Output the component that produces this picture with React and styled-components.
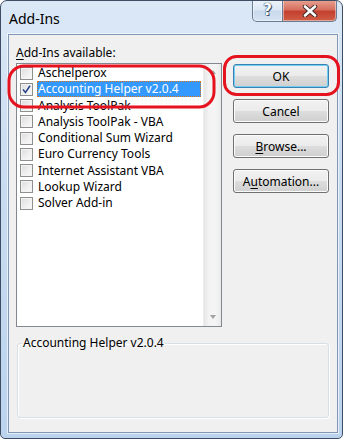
import React from 'react';
import styled, { createGlobalStyle } from 'styled-components';

const Global = createGlobalStyle`
  html, body { margin: 0; padding: 0; background: #ffffff; }
  body { font-family: "Noto Sans", "Liberation Sans", Arial, sans-serif; font-size: 12px; color: #000; }
`;

const Window = styled.div`
  position: relative;
  width: 343px;
  height: 439px;
  box-sizing: border-box;
  border: 1px solid #3d4e64;
  border-radius: 7px 7px 5px 5px;
  background: linear-gradient(180deg, #dbe8f6 0%, #c9dcf1 40%, #bcd3ee 100%);
  display: flex;
  flex-direction: column;
  padding: 0 4px 5px 7px;
  overflow: hidden;
`;

const TitleBar = styled.div`
  height: 33px;
  display: flex;
  align-items: flex-start;
  justify-content: space-between;
`;

const Title = styled.div`
  padding: 8px 0 0 1px;
  font-size: 14px;
  color: #000;
`;

const Caption = styled.div`
  display: flex;
  margin-right: 1px;
  margin-top: -1px;
`;

const CapButton = styled.div`
  height: 22px;
  width: ${p => p.$w}px;
  box-sizing: border-box;
  border: 1px solid #6a7c93;
  border-top: none;
  display: flex;
  align-items: center;
  justify-content: center;
  background: ${p => p.$close
    ? 'linear-gradient(180deg, #e8a291 0%, #d6705f 45%, #c4402f 55%, #cf5e46 100%)'
    : 'linear-gradient(180deg, #edf3fa 0%, #dde8f4 45%, #c9d9ec 55%, #d6e3f2 100%)'};
  border-radius: ${p => p.$close ? '0 0 5px 0' : '0 0 0 5px'};
  border-left: ${p => p.$close ? 'none' : '1px solid #6a7c93'};
  box-shadow: inset 0 0 0 1px rgba(255,255,255,0.45);
`;

const HelpMark = styled.span`
  font-family: "DejaVu Sans", sans-serif;
  font-weight: bold;
  font-size: 15px;
  color: #fff;
  text-shadow: 0 0 1px #2c3e55, 0 0 1px #2c3e55, 1px 1px 0 #44566d;
  margin-top: -1px;
`;

const Client = styled.div`
  flex: 1;
  background: #f0f0f0;
  border: 1px solid #8197b3;
  box-shadow: 0 0 0 1px rgba(255,255,255,0.6);
  display: grid;
  grid-template-columns: 206px 96px;
  grid-template-rows: auto 1fr auto;
  column-gap: 11px;
  padding: 9px 8px 12px 7px;
`;

const Label = styled.div`
  grid-column: 1 / 3;
  height: 19px;
  line-height: 16px;
  padding-top: 1px;
  box-sizing: border-box;
`;

const Ul = styled.span`
  text-decoration: underline;
  text-underline-offset: 2px;
`;

const ListBox = styled.div`
  height: 264px;
  box-sizing: border-box;
  border: 1px solid #828790;
  background: #fff;
  display: flex;
`;

const Items = styled.div`
  flex: 1;
  padding: 1px 2px 0 3px;
`;

const Row = styled.div`
  height: 16.25px;
  display: flex;
  align-items: center;
`;

const Check = styled.div`
  width: 13px;
  height: 13px;
  box-sizing: border-box;
  border: 1px solid #8e8f8f;
  background: linear-gradient(135deg, #dcdcdc 0%, #f0f0f0 60%, #fbfbfb 100%);
  box-shadow: inset 0 0 0 1px #f4f4f4;
  margin-right: 4px;
  display: flex;
  align-items: center;
  justify-content: center;
`;

const ItemText = styled.div`
  flex: 1;
  height: 16px;
  line-height: 16px;
  padding-left: 1px;
  box-sizing: border-box;
  white-space: nowrap;
  color: ${p => p.$sel ? '#fff' : '#000'};
  background: ${p => p.$sel ? '#3399ff' : 'transparent'};
  outline: ${p => p.$sel ? '1px dotted #d9731f' : 'none'};
  outline-offset: -1px;
`;

const ScrollBar = styled.div`
  width: 18px;
  background: linear-gradient(90deg, #e6e6e6 0%, #f4f4f4 30%, #f4f4f4 70%, #e9e9e9 100%);
  border-left: 1px solid #ececec;
  display: flex;
  flex-direction: column;
  justify-content: space-between;
  align-items: center;
  padding: 6px 0 7px;
  box-sizing: border-box;
`;

const Arrow = styled.div`
  width: 0;
  height: 0;
  border-left: 3.5px solid transparent;
  border-right: 3.5px solid transparent;
  ${p => p.$up ? 'border-bottom: 4px solid #a3a3a3;' : 'border-top: 4px solid #a3a3a3;'}
`;

const Buttons = styled.div`
  display: flex;
  flex-direction: column;
  gap: 11px;
  padding-top: 1px;
`;

const Button = styled.div`
  height: 24px;
  box-sizing: border-box;
  border: 1px solid ${p => p.$default ? '#3c7fb1' : '#707070'};
  border-radius: 3px;
  background: linear-gradient(180deg, #f2f2f2 0%, #ebebeb 48%, #dddddd 52%, #cfcfcf 100%);
  box-shadow: inset 0 0 0 1px ${p => p.$default ? '#6fd0f4' : '#fcfcfc'};
  display: flex;
  align-items: center;
  justify-content: center;
  font-size: 12px;
  color: #000;
`;

const Group = styled.fieldset`
  grid-column: 1 / 3;
  margin: 8px 0 2px 1px;
  height: 82px;
  box-sizing: border-box;
  border: 1px solid #d5dfe5;
  border-radius: 3px;
  box-shadow: inset 1px 1px 0 #fff, 1px 1px 0 #fff;
  padding: 0;
`;

const Legend = styled.legend`
  margin-left: 4px;
  padding: 0 1px;
  font-size: 12px;
  line-height: 14px;
`;

const Marks = styled.svg`
  position: absolute;
  left: 0;
  top: 0;
  pointer-events: none;
`;

const items = [
  'Aschelperox',
  'Accounting Helper v2.0.4',
  'Analysis ToolPak',
  'Analysis ToolPak - VBA',
  'Conditional Sum Wizard',
  'Euro Currency Tools',
  'Internet Assistant VBA',
  'Lookup Wizard',
  'Solver Add-in',
];

export default function App() {
  return (
    <>
      <Global />
      <Window>
        <TitleBar>
          <Title>Add-Ins</Title>
          <Caption>
            <CapButton $w={31}><HelpMark>?</HelpMark></CapButton>
            <CapButton $w={54} $close>
              <svg width="16" height="12" viewBox="0 0 16 12">
                <path d="M3 1.5 L13 10.5 M13 1.5 L3 10.5" stroke="#3b2a2a" strokeWidth="4.4" strokeLinecap="round" />
                <path d="M3 1.5 L13 10.5 M13 1.5 L3 10.5" stroke="#ffffff" strokeWidth="2.6" strokeLinecap="round" />
              </svg>
            </CapButton>
          </Caption>
        </TitleBar>
        <Client>
          <Label><Ul>A</Ul>dd-Ins available:</Label>
          <ListBox>
            <Items>
              {items.map((name, i) => (
                <Row key={name}>
                  <Check>
                    {i === 1 && (
                      <svg width="9" height="9" viewBox="0 0 9 9">
                        <path d="M1 4.5 L3.5 7.5 L8 0.8" fill="none" stroke="#2e4a8c" strokeWidth="1.6" />
                      </svg>
                    )}
                  </Check>
                  <ItemText $sel={i === 1}>{name}</ItemText>
                </Row>
              ))}
            </Items>
            <ScrollBar>
              <Arrow $up />
              <Arrow />
            </ScrollBar>
          </ListBox>
          <Buttons>
            <Button $default>OK</Button>
            <Button>Cancel</Button>
            <Button><Ul>B</Ul>rowse...</Button>
            <Button>A<Ul>u</Ul>tomation...</Button>
          </Buttons>
          <Group>
            <Legend>Accounting Helper v2.0.4</Legend>
          </Group>
        </Client>
        <Marks width="343" height="439">
          <rect x="8" y="65" width="205" height="41" rx="15" fill="none" stroke="#e5131f" strokeWidth="3" />
          <rect x="223.5" y="55.5" width="114" height="38" rx="12" fill="none" stroke="#e5131f" strokeWidth="3" />
        </Marks>
      </Window>
    </>
  );
}
